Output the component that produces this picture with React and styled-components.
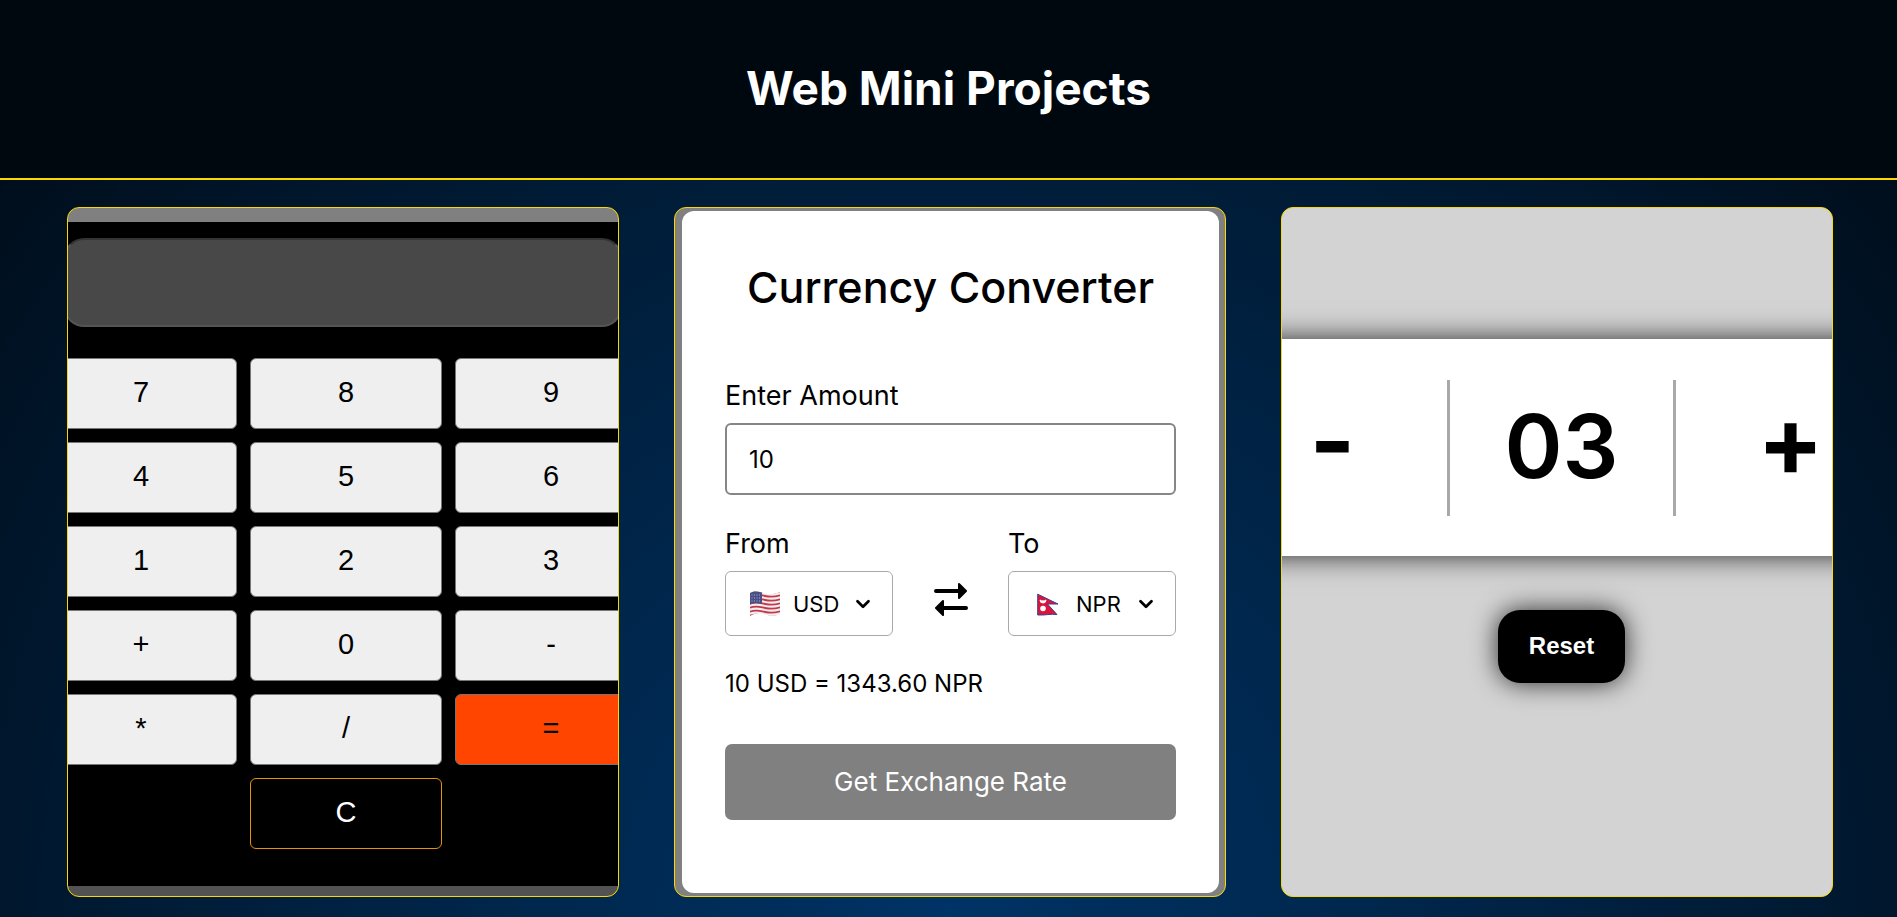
import React, { useState } from 'react';
import styled, { createGlobalStyle } from 'styled-components';
import { ChevronDown } from 'lucide-react';

const body = '"Inter", "Open Sans", sans-serif';
const arial = '"Liberation Sans", Arial, sans-serif';

const Global = createGlobalStyle`
  * { box-sizing: border-box; }
  body {
    margin: 0;
    min-height: 100vh;
    background: radial-gradient(circle at 50% 100%, #003366 0%, #001a33 65%, #000a14 100%);
    font-family: ${body};
  }
  #root { min-height: 100vh; }
  button, input, select { font: inherit; margin: 0; }
`;

const Page = styled.div`
  height: 100vh;
  display: flex;
  flex-direction: column;
  overflow: hidden;
`;

const Header = styled.header`
  flex: none;
  padding: 55px 24px 57px;
  border-bottom: 2px solid #ffd700;
  background: #00080f;
  text-align: center;
`;

const Title = styled.h1`
  margin: 0;
  color: #fff;
  font-size: 46px;
  line-height: 66px;
  font-weight: 700;
`;

const Gallery = styled.main`
  display: grid;
  grid-template-columns: repeat(3, minmax(0, 1fr));
  gap: 55px;
  padding: 27px 64px 27px 67px;
`;

const Card = styled.article`
  display: flex;
  flex-direction: column;
  height: 690px;
  overflow: hidden;
  border: 1px solid #ffd700;
  border-radius: 12px;
  background: ${(p) => p.$background};
`;

const CalcBody = styled.div`
  flex: 1;
  margin: 14px 0 10px;
  padding-top: 16px;
  background: #000;
`;

const Display = styled.output`
  display: block;
  height: 89px;
  margin: 0 -4px 31px;
  border: 2px solid #555;
  border-top-color: #333;
  border-radius: 20px;
  background: #484848;
`;

const Keys = styled.div`
  display: grid;
  grid-template-columns: repeat(3, minmax(0, 1fr));
  gap: 13px;
  margin: 0 -29px 0 -23px;
`;

const Key = styled.button`
  height: 71px;
  padding: 0 0 3px;
  border: 1px solid #767676;
  border-radius: 6px;
  background: ${(p) => (p.$accent ? '#ff4500' : '#efefef')};
  color: #000;
  font-family: ${arial};
  font-size: 29px;
`;

const ClearKey = styled(Key)`
  grid-column: 2;
  border-color: #e69500;
  background: #000;
  color: #fff;
`;

const Converter = styled.form`
  flex: 1;
  display: flex;
  flex-direction: column;
  margin: 3px 6px 3px 7px;
  padding: 51px 43px;
  border-radius: 12px;
  background: #fff;
  color: #000;
  font-size: 24px;
  line-height: 36px;
`;

const ConverterTitle = styled.h2`
  margin: 0 0 66px;
  font-size: 43px;
  line-height: 50px;
  font-weight: 500;
  text-align: center;
  white-space: nowrap;
`;

const Label = styled.label`
  display: block;
  margin-bottom: 9px;
  font-size: 27px;
`;

const Amount = styled.input`
  width: 100%;
  height: 72px;
  margin-bottom: 31px;
  padding: 0 22px;
  border: 2px solid #868686;
  border-radius: 6px;
  background: #fff;
  color: #000;
`;

const Pair = styled.div`
  display: flex;
  justify-content: space-between;
  align-items: flex-end;
`;

const Field = styled.div`
  flex: 0 1 168px;
`;

const Picker = styled.div`
  display: flex;
  align-items: center;
  height: 65px;
  padding: 0 18px 0 23px;
  border: 1px solid #a9a9a9;
  border-radius: 6px;
`;

const Currency = styled.select`
  flex: 1;
  min-width: 0;
  padding: 0 0 0 12px;
  border: 0;
  appearance: none;
  background: transparent;
  color: #000;
  font-size: 22px;
`;

const Swap = styled.button`
  display: flex;
  margin-bottom: 20px;
  padding: 0;
  border: 0;
  background: none;
`;

const Result = styled.p`
  margin: 30px 0 42px;
`;

const Submit = styled.button`
  height: 76px;
  border: 0;
  border-radius: 7px;
  background: #808080;
  color: #fff;
  font-size: 26px;
`;

const Counter = styled.div`
  display: grid;
  grid-template-columns: repeat(3, minmax(0, 1fr));
  align-items: center;
  height: 217px;
  margin: 131px -73px 54px -64px;
  background: #fff;
  box-shadow: 0 0 26px rgba(0, 0, 0, 0.8);
  font-size: 88px;
  font-weight: 600;
  text-align: center;
`;

const Step = styled.button`
  height: 136px;
  padding: 0 0 14px;
  border: 0;
  background: none;
  color: #000;
  font-size: 98px;
  line-height: 122px;
  font-weight: 700;
`;

const Count = styled.output`
  height: 136px;
  border: solid #a9a9a9;
  border-width: 0 3px;
  line-height: 132px;
`;

const Reset = styled.button`
  align-self: center;
  width: 127px;
  height: 73px;
  margin-left: 9px;
  padding: 0 0 2px;
  border: 0;
  border-radius: 22px;
  background: #000;
  box-shadow: 0 0 26px rgba(0, 0, 0, 0.8);
  color: #fff;
  font-family: ${arial};
  font-size: 24px;
  font-weight: 700;
`;

const Art = styled.svg`
  display: block;
  flex: none;
`;

function UsFlag() {
  return (
    <Art width="32" height="26" viewBox="0 0 32 26" aria-hidden="true">
      <clipPath id="us-wave">
        <path d="M1 2C7-1 11 1 16 2.500S26 3 31 1V23C26 25 21 25 16 23.500S6 22 1 25Z" />
      </clipPath>
      <g clipPath="url(#us-wave)">
        <rect width="32" height="26" fill="#f3eef0" />
        {[1, 5, 9, 13, 17, 21, 25].map((y) => (
          <path key={y} d={`M0 ${y}C7 ${y - 3} 11 ${y - 1} 16 ${y}S26 ${y + 1} 32 ${y - 1}`} fill="none" stroke="#c3394a" strokeWidth="1.800" />
        ))}
        <path d="M0 0H13V13C8 12 5 12 0 14Z" fill="#4a4f86" />
        <path d="M2.500 4H12M2.500 7H12M2.500 10H12" stroke="#a9accb" strokeWidth="1" strokeDasharray="1 1.500" />
      </g>
    </Art>
  );
}

function NepalFlag() {
  return (
    <Art width="32" height="26" viewBox="0 0 32 26" aria-hidden="true">
      <path d="M5.700 3.200L26 13H15.500L25 23.600C19 22.500 13 24.500 5.700 24Z" fill="#dc143c" stroke="#3c3f92" strokeWidth="1" strokeLinejoin="round" />
      <path d="M8 9A3 3 0 0 0 14 9A3.500 2 0 0 1 8 9Z" fill="#fff" stroke="#fff" />
      <circle cx="11" cy="17.500" r="2.800" fill="#fff" />
    </Art>
  );
}

function SwapIcon() {
  return (
    <Art width="34" height="34" viewBox="0 0 34 34" aria-hidden="true">
      <path d="M2 9H25M9 26H32" stroke="#000" strokeWidth="4" strokeLinecap="round" />
      <path d="M25 2L32 9L25 16ZM9 19L2 26L9 33Z" stroke="#000" strokeWidth="2" strokeLinejoin="round" />
    </Art>
  );
}

function CurrencyField({ label, id, flag, value }) {
  return (
    <Field>
      <Label htmlFor={id}>{label}</Label>
      <Picker>
        {flag}
        <Currency id={id} defaultValue={value}>
          <option>USD</option>
          <option>NPR</option>
        </Currency>
        <ChevronDown size={22} strokeWidth={3} />
      </Picker>
    </Field>
  );
}

const keys = ['7', '8', '9', '4', '5', '6', '1', '2', '3', '+', '0', '-', '*', '/', '='];

export default function App() {
  const [count, setCount] = useState(3);
  return (
    <>
      <Global />
      <Page>
        <Header>
          <Title>Web Mini Projects</Title>
        </Header>
        <Gallery>
          <Card $background="linear-gradient(#808080, #525252)">
            <CalcBody>
              <Display />
              <Keys>
                {keys.map((k) => (
                  <Key key={k} type="button" $accent={k === '='}>{k}</Key>
                ))}
                <ClearKey type="button">C</ClearKey>
              </Keys>
            </CalcBody>
          </Card>
          <Card $background="#808080">
            <Converter onSubmit={(e) => e.preventDefault()}>
              <ConverterTitle>Currency Converter</ConverterTitle>
              <Label htmlFor="amount">Enter Amount</Label>
              <Amount id="amount" defaultValue="10" />
              <Pair>
                <CurrencyField id="from" label="From" value="USD" flag={<UsFlag />} />
                <Swap type="button" aria-label="Swap currencies"><SwapIcon /></Swap>
                <CurrencyField id="to" label="To" value="NPR" flag={<NepalFlag />} />
              </Pair>
              <Result>10 USD = 1343.60 NPR</Result>
              <Submit>Get Exchange Rate</Submit>
            </Converter>
          </Card>
          <Card $background="#d3d3d3">
            <Counter>
              <Step type="button" onClick={() => setCount(Math.max(0, count - 1))}>-</Step>
              <Count>{String(count).padStart(2, '0')}</Count>
              <Step type="button" onClick={() => setCount(count + 1)}>+</Step>
            </Counter>
            <Reset type="button" onClick={() => setCount(0)}>Reset</Reset>
          </Card>
        </Gallery>
      </Page>
    </>
  );
}
